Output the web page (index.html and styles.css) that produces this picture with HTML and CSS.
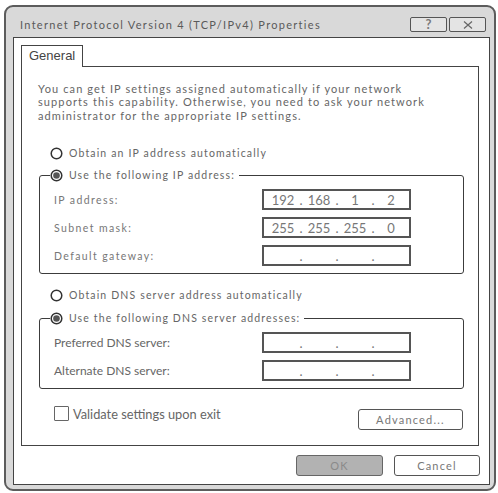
FILE: index.html
```html
<!DOCTYPE html>
<html lang="en">
<head>
<meta charset="utf-8">
<title>Internet Protocol Version 4 (TCP/IPv4) Properties</title>
<link rel="stylesheet" href="styles.css">
</head>
<body>
<div class="window">
  <div class="titlebar">
    <div class="title">Internet Protocol Version 4 (TCP/IPv4) Properties</div>
    <div class="tbtns">
      <div class="tbtn help">?</div>
      <div class="tbtn close"><svg width="10" height="8" viewBox="0 0 10 8"><path d="M1 0.5 L9 7.5 M9 0.5 L1 7.5" stroke="#666" stroke-width="1.2" fill="none"/></svg></div>
    </div>
  </div>
  <div class="panel">
    <div class="tabs"><div class="tab">General</div></div>
    <div class="page">
      <p class="intro">You can get IP settings assigned automatically if your network<br>supports this capability. Otherwise, you need to ask your network<br>administrator for the appropriate IP settings.</p>

      <div class="opt first-opt">
        <svg class="radio" width="13" height="13" viewBox="0 0 13 13"><circle cx="6.5" cy="6.5" r="5.3" fill="#fff" stroke="#333" stroke-width="1.5"/></svg>
        <span>Obtain an IP address automatically</span>
      </div>
      <fieldset class="group">
        <legend class="opt">
          <svg class="radio" width="13" height="13" viewBox="0 0 13 13"><circle cx="6.5" cy="6.5" r="5.3" fill="#fff" stroke="#333" stroke-width="1.5"/><circle cx="6.5" cy="6.5" r="3.3" fill="#555"/></svg>
          <span>Use the following IP address:</span>
        </legend>
        <div class="rows">
          <div class="row"><span class="lbl">IP address:</span>
            <div class="ip"><span class="seg">192</span><span class="dot">.</span><span class="seg">168</span><span class="dot">.</span><span class="seg">1</span><span class="dot">.</span><span class="seg">2</span></div></div>
          <div class="row"><span class="lbl">Subnet mask:</span>
            <div class="ip"><span class="seg">255</span><span class="dot">.</span><span class="seg">255</span><span class="dot">.</span><span class="seg">255</span><span class="dot">.</span><span class="seg">0</span></div></div>
          <div class="row"><span class="lbl">Default gateway:</span>
            <div class="ip"><span class="seg"></span><span class="dot">.</span><span class="seg"></span><span class="dot">.</span><span class="seg"></span><span class="dot">.</span><span class="seg"></span></div></div>
        </div>
      </fieldset>

      <div class="opt dns-opt">
        <svg class="radio" width="13" height="13" viewBox="0 0 13 13"><circle cx="6.5" cy="6.5" r="5.3" fill="#fff" stroke="#333" stroke-width="1.5"/></svg>
        <span>Obtain DNS server address automatically</span>
      </div>
      <fieldset class="group dns-group">
        <legend class="opt">
          <svg class="radio" width="13" height="13" viewBox="0 0 13 13"><circle cx="6.5" cy="6.5" r="5.3" fill="#fff" stroke="#333" stroke-width="1.5"/><circle cx="6.5" cy="6.5" r="3.3" fill="#555"/></svg>
          <span>Use the following DNS server addresses:</span>
        </legend>
        <div class="rows">
          <div class="row"><span class="lbl plain">Preferred DNS server:</span>
            <div class="ip"><span class="seg"></span><span class="dot">.</span><span class="seg"></span><span class="dot">.</span><span class="seg"></span><span class="dot">.</span><span class="seg"></span></div></div>
          <div class="row"><span class="lbl plain">Alternate DNS server:</span>
            <div class="ip"><span class="seg"></span><span class="dot">.</span><span class="seg"></span><span class="dot">.</span><span class="seg"></span><span class="dot">.</span><span class="seg"></span></div></div>
        </div>
      </fieldset>

      <div class="bottom-row">
        <div class="check"><span class="box"></span><span class="check-text">Validate settings upon exit</span></div>
        <div class="btn advanced">Advanced...</div>
      </div>
    </div>
    <div class="actions">
      <div class="btn ok">OK</div>
      <div class="btn cancel">Cancel</div>
    </div>
  </div>
</div>
</body>
</html>
```

FILE: styles.css
```css
* { box-sizing: border-box; }
html, body { margin: 0; padding: 0; background: #fff; }
body {
  width: 498px;
  height: 493px;
  overflow: hidden;
  font-family: Lato, "Open Sans", sans-serif;
  color: #666;
}

.window {
  margin: 5px 0 0 4px;
  width: 492px;
  height: 486px;
  border: 2px solid #5c5c5c;
  border-radius: 9px;
  background: #d9d9d9;
  display: flex;
  flex-direction: column;
}

.titlebar {
  height: 30px;
  flex: none;
  display: flex;
  justify-content: space-between;
  align-items: flex-start;
  padding: 10px 8px 0 14px;
}
.title {
  font-size: 11px;
  letter-spacing: 1.3px;
  line-height: 15px;
  color: #5a5a5a;
}
.tbtns { display: flex; gap: 2px; }
.tbtn {
  width: 37px;
  height: 15px;
  border: 1px solid #555;
  border-radius: 2px;
  background: #e4e4e4;
  display: flex;
  align-items: center;
  justify-content: center;
}
.help {
  font-size: 13px;
  font-weight: 700;
  color: #7a7a7a;
  line-height: 13px;
}

.panel {
  flex: 1;
  margin: 0 4px 4px 7px;
  border: 1px solid #444;
  background: #fff;
  display: flex;
  flex-direction: column;
  padding: 7px 9px 8px 7px;
}

.tabs { display: flex; }
.tab {
  position: relative;
  z-index: 1;
  width: 62px;
  height: 22px;
  margin-bottom: -1px;
  border: 1px solid #444;
  border-bottom: none;
  background: #fff;
  padding: 2px 0 0 7px;
  font-family: "Liberation Sans", Arial, sans-serif;
  font-size: 13px;
  line-height: 15px;
  color: #444;
}

.page {
  height: 380px;
  margin-right: 1px;
  border: 1px solid #444;
  padding: 15px 14px 0 16px;
}

.intro {
  margin: 0;
  font-size: 11px;
  letter-spacing: 1.1px;
  line-height: 13.4px;
  color: #666;
}

.opt {
  display: flex;
  align-items: center;
  gap: 6px;
  height: 14px;
  font-size: 10.5px;
  letter-spacing: 1.15px;
  color: #666;
  white-space: nowrap;
}
.radio { flex: none; display: block; }
.first-opt { margin: 24px 0 0 12px; }
.dns-opt { margin: 14px 0 0 12px; }

.group {
  margin: 8px 0 0 1px;
  width: 425px;
  padding: 0 0 7px 0;
  border: 1px solid #3c3c3c;
  border-radius: 3px;
}
.dns-group { margin-top: 9px; }
.group legend {
  margin-left: 10px;
  padding: 0 4px 0 0;
}

.rows {
  margin-top: 7px;
  display: flex;
  flex-direction: column;
  gap: 7px;
}
.row {
  display: grid;
  grid-template-columns: 208px 149px;
  align-items: center;
  padding-left: 14px;
}
.lbl {
  font-size: 10.5px;
  letter-spacing: 1.4px;
  color: #777;
}
.lbl.plain {
  font-size: 12px;
  letter-spacing: 0;
  color: #666;
}

.ip {
  height: 21px;
  border: 2px solid #555;
  display: flex;
  align-items: center;
  padding-left: 3px;
  font-size: 13px;
  color: #777;
}
.seg { width: 32px; text-align: center; }
.dot { width: 4px; text-align: center; }

.bottom-row {
  margin-top: 17px;
  display: flex;
  justify-content: space-between;
  align-items: flex-start;
}
.check {
  display: flex;
  align-items: center;
  gap: 4px;
  margin-left: 16px;
  height: 15px;
}
.box {
  width: 15px;
  height: 15px;
  border: 1px solid #666;
  border-radius: 1px;
  background: #fff;
}
.check-text {
  font-size: 12.8px;
  color: #666;
}

.btn {
  height: 21px;
  border: 1px solid #555;
  border-radius: 3px;
  background: #fff;
  display: flex;
  align-items: center;
  justify-content: center;
  font-size: 11px;
  letter-spacing: 1.2px;
  color: #777;
}
.advanced { width: 105px; margin: 3px 1px 0 0; }

.actions {
  margin-top: 9px;
  display: flex;
  justify-content: flex-end;
  gap: 11px;
}
.ok { width: 87px; background: #b2b2b2; color: #8a8a8a; border-color: #666; }
.cancel { width: 86px; }
```
